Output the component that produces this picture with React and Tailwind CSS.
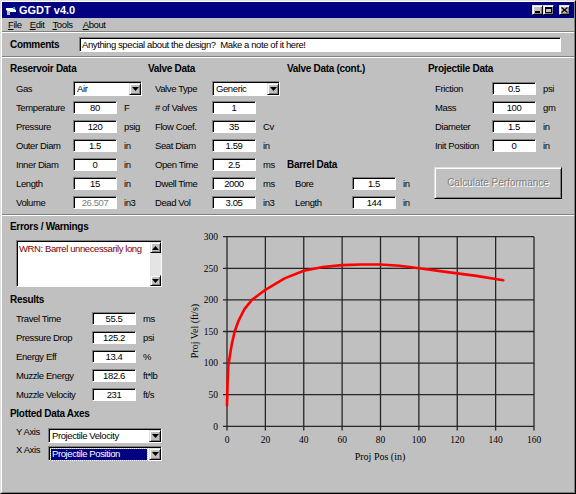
import React from 'react';

// projectile velocity vs position (in, ft/s)
const curve = [
  [0, 33], [0.3, 70], [0.7, 95], [1.5, 112], [2.5, 130], [4, 150], [6, 167], [9, 185],
  [13, 200], [20, 216], [30, 234], [40, 246], [50, 252], [60, 255], [70, 256], [80, 256],
  [90, 254], [100, 250], [115, 244], [130, 238], [144, 231],
];

const X0 = 227;
const XS = 307 / 160;
const Y0 = 426.3;
const YS = 189.6 / 300;
const px = (x) => X0 + x * XS;
const py = (v) => Y0 - v * YS;

const Field = ({ value, dim }) => (
  <div className={`w-[44px] h-[13px] shrink-0 bg-white border border-t-[#808080] border-l-[#808080] border-r-white border-b-white shadow-[inset_1px_1px_0_#000] flex items-center justify-center ${dim ? 'text-[#808080]' : 'text-black'}`}>
    {value}
  </div>
);

const Row = ({ label, value, unit, wide, dim }) => (
  <div className="h-[19px] flex items-center">
    <span className={`${wide ? 'w-[76px]' : 'w-[57px]'} shrink-0`}>{label}</span>
    <Field value={value} dim={dim} />
    {unit && <span className="ml-[7px]">{unit}</span>}
  </div>
);

const Head = ({ children }) => (
  <div className="h-[13px] flex items-center font-['Liberation_Sans',sans-serif] font-bold text-[10px] tracking-[-0.3px]">{children}</div>
);

const Arrow = ({ up }) => (
  <svg width="7" height="4" viewBox="0 0 7 4">
    <path d={up ? 'M3.5 0L7 4H0z' : 'M0 0h7L3.5 4z'} fill="#000" />
  </svg>
);

const RaisedBtn = ({ children, className }) => (
  <div className={`bg-[#c0c0c0] border border-t-[#dfdfdf] border-l-[#dfdfdf] border-r-black border-b-black shadow-[inset_1px_1px_0_#fff,inset_-1px_-1px_0_#808080] flex items-center justify-center ${className}`}>
    {children}
  </div>
);

const Combo = ({ value, w, selected }) => (
  <div className={`${w} h-[15px] shrink-0 bg-white border border-t-[#808080] border-l-[#808080] border-r-white border-b-white shadow-[inset_1px_1px_0_#000] flex items-stretch`}>
    <div className="flex-1 flex items-center pl-[2px] pr-[2px] pt-[1px]">
      {selected ? (
        <span className="w-full h-[11px] bg-[#000080] text-white flex items-center pl-[1px] outline outline-1 outline-dotted outline-[#c0c080]">{value}</span>
      ) : (
        <span className="pl-[1px]">{value}</span>
      )}
    </div>
    <RaisedBtn className="w-[12px] mt-[1px]">
      <Arrow />
    </RaisedBtn>
  </div>
);

const Etched = () => <div className="h-[2px] shrink-0 border-t border-t-[#808080] border-b border-b-white" />;

const Chart = () => {
  const yv = [0, 50, 100, 150, 200, 250, 300];
  const xv = [0, 20, 40, 60, 80, 100, 120, 140, 160];
  const line = curve.map(([x, v]) => `${px(x).toFixed(1)},${py(v).toFixed(1)}`).join(' ');
  return (
    <svg width="398" height="276" viewBox="176 216 398 276" className="shrink-0 tracking-normal">
      {yv.map((v) => (
        <line key={'h' + v} x1="223" x2={px(160)} y1={py(v)} y2={py(v)} stroke="#262626" strokeWidth="1.3" />
      ))}
      {xv.map((x) => (
        <line key={'v' + x} x1={px(x)} x2={px(x)} y1={py(300)} y2="430.5" stroke="#262626" strokeWidth="1.3" />
      ))}
      <polyline points={line} fill="none" stroke="#ff0000" strokeWidth="2.6" strokeLinejoin="round" strokeLinecap="round" />
      <g fontFamily="'Liberation Serif', serif" fontSize="9.5" fill="#000">
        {yv.map((v) => (
          <text key={'yl' + v} x="218" y={py(v) + 3.3} textAnchor="end">{v}</text>
        ))}
        {xv.map((x) => (
          <text key={'xl' + x} x={px(x)} y="442.8" textAnchor="middle">{x}</text>
        ))}
      </g>
      <text x="380" y="459.5" textAnchor="middle" fontFamily="'Liberation Serif', serif" fontSize="10" fill="#000">Proj Pos (in)</text>
      <text x="198" y="331" textAnchor="middle" fontFamily="'Liberation Serif', serif" fontSize="10" fill="#000" transform="rotate(-90 198 331)">Proj Vel (ft/s)</text>
    </svg>
  );
};

const App = () => {
  return (
    <div className="w-[576px] h-[494px] bg-[#c0c0c0] border border-t-[#dfdfdf] border-l-[#dfdfdf] border-r-black border-b-black text-black font-['Liberation_Sans',sans-serif] text-[9.5px] tracking-[-0.4px] leading-none select-none">
      <div className="h-full flex flex-col border border-t-white border-l-white border-r-[#808080] border-b-[#808080]">
        {/* Title bar */}
        <div className="h-[16px] shrink-0 bg-[#000080] flex items-center pl-[3px] pr-[4px]">
          <svg width="12" height="11" viewBox="0 0 12 11" className="shrink-0">
            <path d="M1 3h7l3 2v2H4L1 5z" fill="#fff" />
            <rect x="2" y="6" width="3" height="4" fill="#c0c0c0" />
            <rect x="8" y="2" width="2" height="2" fill="#00c0c0" />
          </svg>
          <span className="ml-[2px] text-white font-bold text-[11px] tracking-normal">GGDT v4.0</span>
          <div className="ml-auto flex items-center">
            <RaisedBtn className="w-[11px] h-[10px]">
              <div className="w-[5px] h-[2px] bg-black mt-[4px] -ml-[1px]" />
            </RaisedBtn>
            <RaisedBtn className="w-[11px] h-[10px]">
              <div className="w-[7px] h-[6px] border border-black border-t-2" />
            </RaisedBtn>
            <RaisedBtn className="w-[11px] h-[10px] ml-[5px]">
              <svg width="7" height="6" viewBox="0 0 7 6">
                <path d="M0.5 0.5L6.5 5.5M6.5 0.5L0.5 5.5" stroke="#000" strokeWidth="1.4" />
              </svg>
            </RaisedBtn>
          </div>
        </div>

        {/* Menu */}
        <div className="h-[13px] shrink-0 flex items-center pl-[6px] gap-[8px]">
          <span><u>F</u>ile</span>
          <span><u>E</u>dit</span>
          <span><u>T</u>ools</span>
          <span className="ml-[2px]"><u>A</u>bout</span>
        </div>
        <Etched />

        {/* Comments */}
        <div className="h-[23px] shrink-0 flex items-center pl-[8px]">
          <div className="w-[69px]"><Head>Comments</Head></div>
          <div className="w-[482px] h-[15px] bg-white border border-t-[#808080] border-l-[#808080] border-r-white border-b-white shadow-[inset_1px_1px_0_#000] flex items-center pl-[2px]">
            Anything special about the design?&nbsp; Make a note of it here!
          </div>
        </div>
        <Etched />

        {/* Input data */}
        <div className="h-[156px] shrink-0 flex pl-[8px] pt-[4px]">
          <div className="w-[138px]">
            <Head>Reservoir Data</Head>
            <div className="mt-[4px] pl-[6px]">
              <div className="h-[19px] flex items-center">
                <span className="w-[57px] shrink-0">Gas</span>
                <Combo value="Air" w="w-[69px]" />
              </div>
              <Row label="Temperature" value="80" unit="F" />
              <Row label="Pressure" value="120" unit="psig" />
              <Row label="Outer Diam" value="1.5" unit="in" />
              <Row label="Inner Diam" value="0" unit="in" />
              <Row label="Length" value="15" unit="in" />
              <Row label="Volume" value="26.507" unit="in3" dim />
            </div>
          </div>

          <div className="w-[139px]">
            <Head>Valve Data</Head>
            <div className="mt-[4px] pl-[7px]">
              <div className="h-[19px] flex items-center">
                <span className="w-[57px] shrink-0">Valve Type</span>
                <Combo value="Generic" w="w-[68px]" />
              </div>
              <Row label="# of Valves" value="1" />
              <Row label="Flow Coef." value="35" unit="Cv" />
              <Row label="Seat Diam" value="1.59" unit="in" />
              <Row label="Open Time" value="2.5" unit="ms" />
              <Row label="Dwell Time" value="2000" unit="ms" />
              <Row label="Dead Vol" value="3.05" unit="in3" />
            </div>
          </div>

          <div className="w-[141px]">
            <Head>Valve Data (cont.)</Head>
            <div className="mt-[4px]">
              <div className="h-[76px]" />
              <div className="h-[19px] flex items-center"><Head>Barrel Data</Head></div>
              <div className="pl-[8px]">
                <Row label="Bore" value="1.5" unit="in" />
                <Row label="Length" value="144" unit="in" />
              </div>
            </div>
          </div>

          <div className="flex-1">
            <Head>Projectile Data</Head>
            <div className="mt-[4px] pl-[7px]">
              <Row label="Friction" value="0.5" unit="psi" />
              <Row label="Mass" value="100" unit="gm" />
              <Row label="Diameter" value="1.5" unit="in" />
              <Row label="Init Position" value="0" unit="in" />
            </div>
            <RaisedBtn className="ml-[6px] mt-[12px] w-[128px] h-[32px]">
              <span className="text-[10px] tracking-normal text-[#808080] [text-shadow:1px_1px_0_#fff]">Calculate Performance</span>
            </RaisedBtn>
          </div>
        </div>
        <Etched />

        {/* Results + plot */}
        <div className="flex-1 flex min-h-0">
          <div className="w-[174px] shrink-0 pl-[8px] pt-[4px] flex flex-col">
            <Head>Errors / Warnings</Head>
            <div className="mt-[7px] ml-[6px] w-[146px] h-[47px] bg-white border border-t-[#808080] border-l-[#808080] border-r-white border-b-white shadow-[inset_1px_1px_0_#000] flex">
              <div className="flex-1 pl-[2px] pt-[3px] text-[#800000]">WRN: Barrel unnecessarily long</div>
              <div className="w-[11px] flex flex-col mt-[1px]">
                <RaisedBtn className="h-[11px]"><Arrow up /></RaisedBtn>
                <div className="flex-1 bg-[#e4e4e4]" />
                <RaisedBtn className="h-[11px]"><Arrow /></RaisedBtn>
              </div>
            </div>

            <div className="mt-[6px]"><Head>Results</Head></div>
            <div className="mt-[3px] pl-[6px]">
              <Row wide label="Travel Time" value="55.5" unit="ms" />
              <Row wide label="Pressure Drop" value="125.2" unit="psi" />
              <Row wide label="Energy Eff" value="13.4" unit="%" />
              <Row wide label="Muzzle Energy" value="182.6" unit="ft*lb" />
              <Row wide label="Muzzle Velocity" value="231" unit="ft/s" />
            </div>

            <div className="mt-[3px]"><Head>Plotted Data Axes</Head></div>
            <div className="mt-[7px] pl-[6px]">
              <div className="h-[18px] flex items-start">
                <span className="w-[32px] shrink-0">Y Axis</span>
                <div className="mt-[1px]"><Combo value="Projectile Velocity" w="w-[114px]" /></div>
              </div>
              <div className="h-[18px] flex items-start">
                <span className="w-[32px] shrink-0">X Axis</span>
                <div className="mt-[1px]"><Combo value="Projectile Position" w="w-[114px]" selected /></div>
              </div>
            </div>
          </div>

          <Chart />
        </div>
      </div>
    </div>
  );
};

export default App;
